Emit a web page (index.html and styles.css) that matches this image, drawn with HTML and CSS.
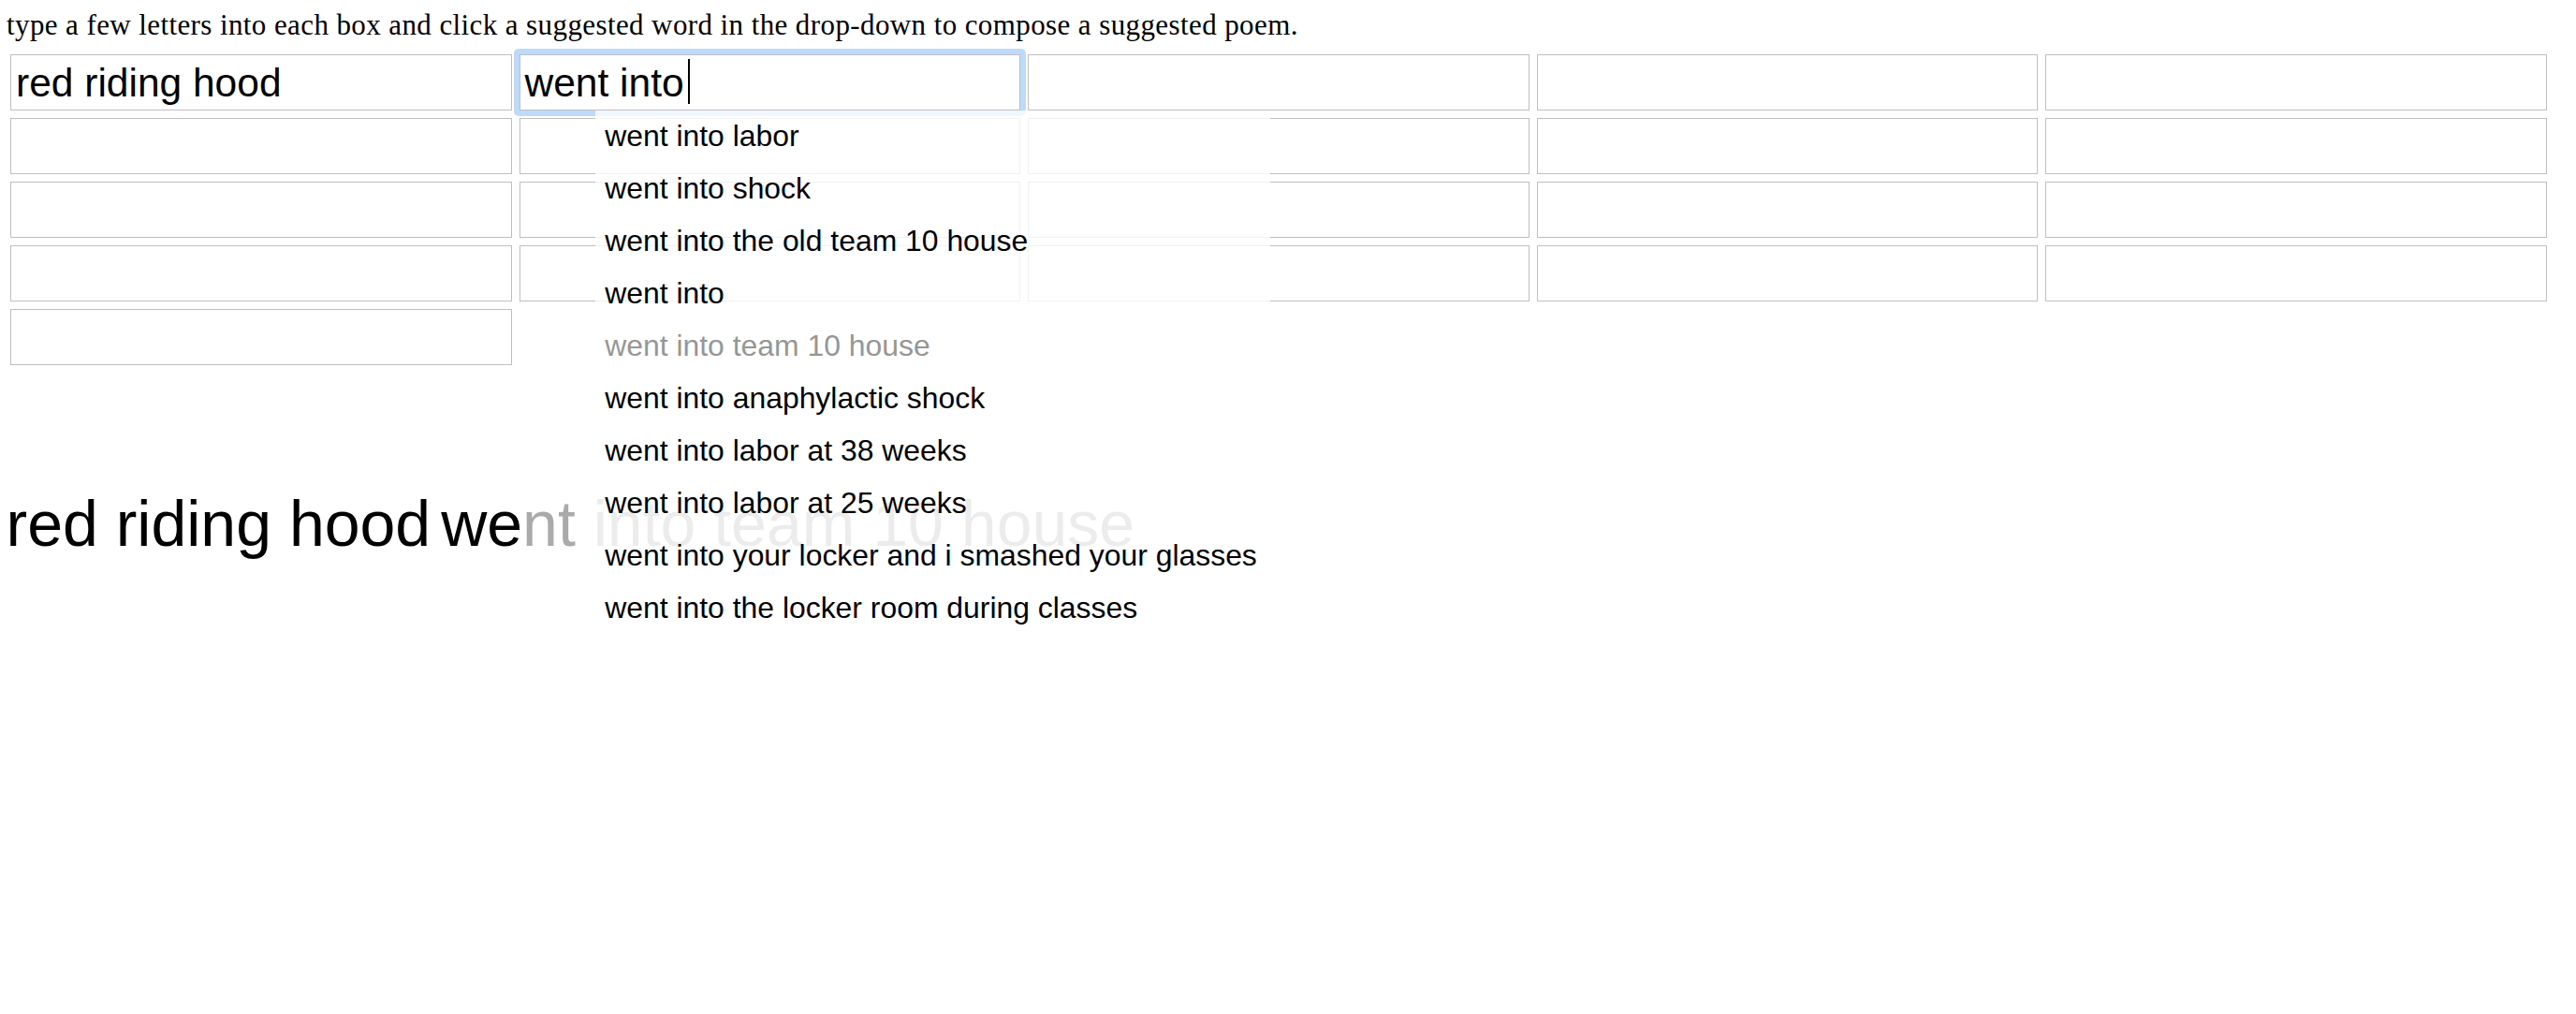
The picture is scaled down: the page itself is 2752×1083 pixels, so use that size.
FILE: index.html
```html
<!DOCTYPE html>
<html lang="en">
<head>
<meta charset="utf-8">
<title>suggested poem</title>
<link rel="stylesheet" href="styles.css">
</head>
<body>
<p class="intro">type a few letters into each box and click a suggested word in the drop-down to compose a suggested poem.</p>
<div class="grid">
  <div class="box">red riding hood</div>
  <div class="box focused">went into<span class="caret"></span>
    <ul class="dropdown">
      <li>went into labor</li>
      <li>went into shock</li>
      <li>went into the old team 10 house</li>
      <li>went into</li>
      <li class="muted">went into team 10 house</li>
      <li>went into anaphylactic shock</li>
      <li>went into labor at 38 weeks</li>
      <li>went into labor at 25 weeks</li>
      <li>went into your locker and i smashed your glasses</li>
      <li>went into the locker room during classes</li>
    </ul>
  </div>
  <div class="box"></div>
  <div class="box"></div>
  <div class="box"></div>
  <div class="box"></div>
  <div class="box"></div>
  <div class="box"></div>
  <div class="box"></div>
  <div class="box"></div>
  <div class="box"></div>
  <div class="box"></div>
  <div class="box"></div>
  <div class="box"></div>
  <div class="box"></div>
  <div class="box"></div>
  <div class="box"></div>
  <div class="box"></div>
  <div class="box"></div>
  <div class="box"></div>
  <div class="box"></div>
</div>
<div class="poem"><span class="word">red riding hood</span><span class="word next"><span class="typed">we</span><span class="rest">nt into team 10 house</span></span></div>
</body>
</html>
```
FILE: styles.css
```css
html, body {
  margin: 0;
  padding: 0;
  background: #ffffff;
}

body {
  min-height: 100vh;
  font-family: "Liberation Sans", Arial, sans-serif;
  color: #000000;
}

.intro {
  margin: 10px 0 0 7px;
  font-family: "Liberation Serif", "Times New Roman", serif;
  font-size: 31px;
  letter-spacing: 0.4px;
  line-height: 33px;
  white-space: nowrap;
}

.grid {
  display: grid;
  grid-template-columns: repeat(5, 535.5px);
  grid-auto-rows: 60px;
  column-gap: 8px;
  row-gap: 8px;
  margin: 15px 0 0 11px;
}

.box {
  position: relative;
  box-sizing: border-box;
  border: 1px solid #bfbfbf;
  background: #ffffff;
  padding: 2px 5px 0;
  font-size: 42.5px;
  line-height: 56px;
  white-space: nowrap;
}

.focused::before {
  content: "";
  position: absolute;
  left: -7px;
  top: -7px;
  right: -7px;
  bottom: -7px;
  border: 6px solid #bddafa;
  border-radius: 5px;
  pointer-events: none;
}

.caret {
  display: inline-block;
  width: 2px;
  height: 48px;
  margin-left: 4px;
  background: #000000;
  vertical-align: -8px;
}

.dropdown {
  position: absolute;
  left: 80px;
  top: 59px;
  z-index: 5;
  margin: 0;
  padding: 0 14px 3px 10.7px;
  list-style: none;
  background: rgba(255, 255, 255, 0.78);
  font-size: 31.9px;
}

.dropdown li {
  height: 56px;
  line-height: 54px;
  white-space: nowrap;
}

.dropdown .muted {
  color: #969696;
}

.poem {
  margin: 129px 0 0 6.5px;
  font-size: 68px;
  line-height: 80px;
  white-space: nowrap;
}

.next {
  margin-left: 11px;
}

.rest {
  color: #aaaaaa;
}
```
